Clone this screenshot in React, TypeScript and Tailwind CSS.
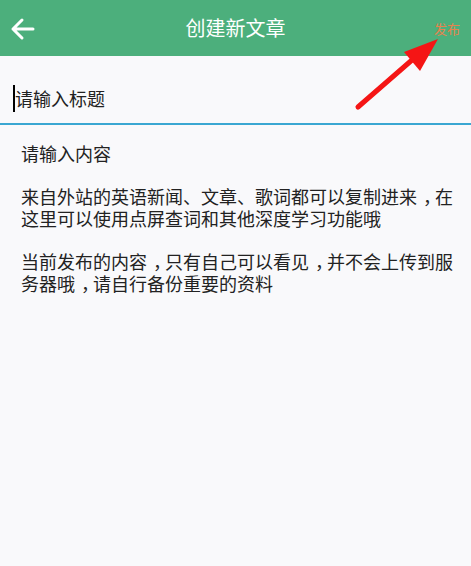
import React from "react";

const cjk = { fontFamily: '"Noto Sans CJK SC", "Noto Sans", sans-serif' };

function BackArrow() {
  return (
    <svg width="26" height="26" viewBox="0 0 26 26" fill="none">
      <path d="M23 13H3M12 4L3 13l9 9" stroke="white" strokeWidth="3" strokeLinecap="round" strokeLinejoin="round" />
    </svg>
  );
}

// One line of body text; full-width commas are nudged toward the middle of their cell
function Line({ text }: { text: string }) {
  const parts = text.split("，");
  return (
    <div className="h-[21.7px] flex">
      {parts.map((p, i) => (
        <React.Fragment key={i}>
          {i > 0 && <span className="inline-block pl-[6px] tracking-[-6px]">，</span>}
          {p && <span className="inline-block">{p}</span>}
        </React.Fragment>
      ))}
    </div>
  );
}

const lines = [
  "请输入内容",
  "",
  "来自外站的英语新闻、文章、歌词都可以复制进来，在",
  "这里可以使用点屏查词和其他深度学习功能哦",
  "",
  "当前发布的内容，只有自己可以看见，并不会上传到服",
  "务器哦，请自行备份重要的资料",
];

export default function App() {
  return (
    <div className="w-[471px] h-[566px] bg-[#f9f9fb] relative overflow-hidden" style={cjk}>
      <header className="h-[56px] bg-[#4caf7c] flex items-center justify-between relative">
        <div className="pl-[10px] pt-[1px] flex items-center">
          <BackArrow />
        </div>
        <div className="absolute left-0 right-0 text-center text-white text-[20px] leading-none pointer-events-none">
          创建新文章
        </div>
        <div className="pr-[11px] text-[13px] text-[#e5834e] leading-none">发布</div>
      </header>

      <div className="h-[69px] flex items-center pl-[13px] pt-[17px] border-b-2 border-[#3ba7d2]">
        <span className="w-[2px] h-[27px] bg-black" />
        <span className="text-[18px] text-[#222] leading-none">请输入标题</span>
      </div>

      <div className="px-[21px] pt-[18px] text-[18px] leading-[21.7px] text-[#222] whitespace-pre flex flex-col">
        {lines.map((l, i) => (
          <Line key={i} text={l} />
        ))}
      </div>

      <svg className="absolute left-0 top-0 pointer-events-none" width="471" height="566">
        <line x1="358" y1="107" x2="412" y2="60" stroke="#f51515" strokeWidth="5" strokeLinecap="round" />
        <polygon points="438,39 404,52 420,71" fill="#f51515" />
      </svg>
    </div>
  );
}
